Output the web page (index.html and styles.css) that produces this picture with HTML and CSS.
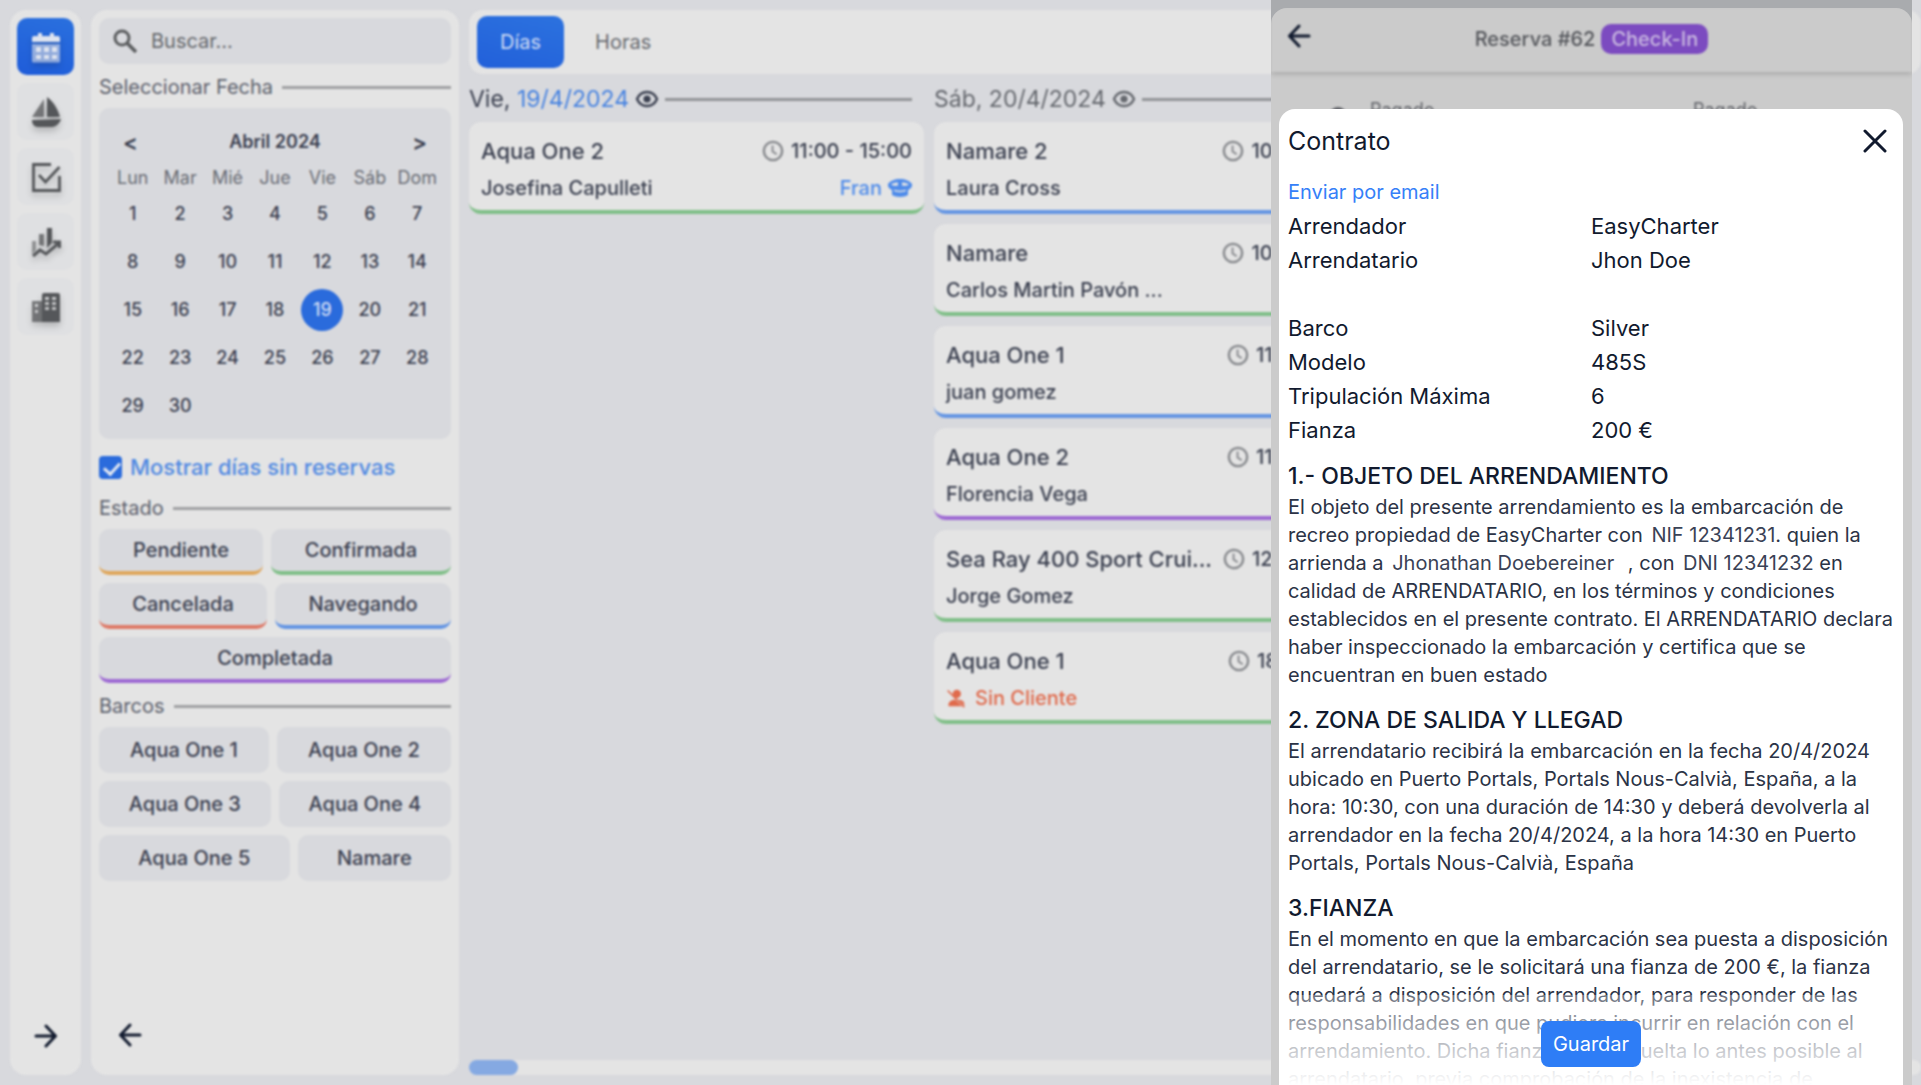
FILE: index.html
```html
<!DOCTYPE html>
<html lang="es">
<head>
<meta charset="utf-8">
<meta name="viewport" content="width=device-width, initial-scale=1">
<title>EasyCharter - Reservas</title>
<link rel="stylesheet" href="styles.css">
</head>
<body>
<svg class="sprite" aria-hidden="true">
  <symbol id="eye" viewBox="0 0 24 24"><path fill="none" stroke="currentColor" stroke-width="2.4" d="M2 12c2-4.600 5.700-7 10-7s8 2.400 10 7c-2 4.600-5.700 7-10 7s-8-2.400-10-7z"/><circle cx="12" cy="12" r="3.600" fill="currentColor"/></symbol>
  <symbol id="clock" viewBox="0 0 24 24"><circle cx="12" cy="12" r="10" fill="none" stroke="currentColor" stroke-width="2.600"/><path fill="none" stroke="currentColor" stroke-width="2" d="M11.500 6v6.500l4.500 3"/></symbol>
  <symbol id="arrow-left" viewBox="0 0 24 24"><path fill="none" stroke="currentColor" stroke-width="3" stroke-linecap="round" stroke-linejoin="round" d="M22 12H2.500M12 2L2.500 12l9.500 10"/></symbol>
  <symbol id="arrow-right" viewBox="0 0 24 24"><path fill="none" stroke="currentColor" stroke-width="3" stroke-linecap="round" stroke-linejoin="round" d="M2 12h19.500M12 2l9.500 10-9.500 10"/></symbol>
</svg>

<div class="app">
  <nav class="rail" aria-label="Principal">
    <button class="rail-button active" aria-label="Calendario"><svg viewBox="0 0 32 32"><path fill="currentColor" d="M4 5h4V2h4v3h8V2h4v3h4a2 2 0 0 1 2 2v4H2V7a2 2 0 0 1 2-2z"/><path fill="currentColor" opacity=".6" d="M2 13h28v17a1.500 1.500 0 0 1-1.500 1.500h-25A1.500 1.500 0 0 1 2 30z"/><path fill="currentColor" d="M6 16h5v5H6zm8 0h5v5h-5zm8 0h5v5h-5zM6 24h5v4H6zm8 0h5v4h-5zm8 0h5v4h-5z"/></svg></button>
    <button class="rail-button" aria-label="Barcos"><svg viewBox="0 0 32 32"><path fill="currentColor" opacity=".75" d="M14 3v18H2z"/><path fill="currentColor" d="M17 1c6 4 11 12 13 20H17zM2 24l29-1c-1 4-5 8-9 8H8c-4 0-6-3-6-7z"/></svg></button>
    <button class="rail-button" aria-label="Tareas"><svg viewBox="0 0 32 32"><path fill="none" stroke="currentColor" stroke-width="2.800" d="M21 3.500H3.500v26h26V15M9 14l6.500 7L29.500 6"/></svg></button>
    <button class="rail-button" aria-label="Estadísticas"><svg viewBox="0 0 32 32"><path fill="currentColor" opacity=".55" d="M2 15h4v9l-4 4z"/><path fill="currentColor" opacity=".75" d="M9 8h5v12l-5-1z"/><path fill="currentColor" d="M17 2h5v15l-5 5z"/><path fill="none" stroke="currentColor" stroke-width="3" d="M3 30l7-6 6 4L29 17M23 16h6.500v6"/></svg></button>
    <button class="rail-button" aria-label="Empresa"><svg viewBox="0 0 32 32"><path fill="currentColor" opacity=".75" fill-rule="evenodd" d="M2 10h10v21H2zM5 13v3h3v-3zm0 6v3h3v-3z"/><path fill="currentColor" fill-rule="evenodd" d="M14 2h14a2 2 0 0 1 2 2v27H12V4a2 2 0 0 1 2-2zm1 4v3h4V6zm7 0v3h4V6zm-7 5v3h4v-3zm7 0v3h4v-3zm-7 5v3h4v-3zm7 0v3h4v-3z"/></svg></button>
    <button class="icon-button rail-toggle" aria-label="Expandir menú"><svg><use href="#arrow-right"/></svg></button>
  </nav>

  <aside class="filters">
    <label class="search">
      <svg viewBox="0 0 24 24"><circle cx="9" cy="9" r="7" fill="none" stroke="currentColor" stroke-width="3"/><path stroke="currentColor" stroke-width="3.600" d="M14 14l9 9"/></svg>
      <input type="search" placeholder="Buscar..." aria-label="Buscar">
    </label>

    <section class="group">
      <h2 class="rule-title">Seleccionar Fecha</h2>
      <div class="calendar">
        <div class="calendar-head"><button aria-label="Mes anterior">&lt;</button><strong>Abril 2024</strong><button aria-label="Mes siguiente">&gt;</button></div>
        <table>
          <thead><tr><th>Lun</th><th>Mar</th><th>Mié</th><th>Jue</th><th>Vie</th><th>Sáb</th><th>Dom</th></tr></thead>
          <tbody>
            <tr><td>1</td><td>2</td><td>3</td><td>4</td><td>5</td><td>6</td><td>7</td></tr>
            <tr><td>8</td><td>9</td><td>10</td><td>11</td><td>12</td><td>13</td><td>14</td></tr>
            <tr><td>15</td><td>16</td><td>17</td><td>18</td><td><span class="selected">19</span></td><td>20</td><td>21</td></tr>
            <tr><td>22</td><td>23</td><td>24</td><td>25</td><td>26</td><td>27</td><td>28</td></tr>
            <tr><td>29</td><td>30</td><td></td><td></td><td></td><td></td><td></td></tr>
          </tbody>
        </table>
      </div>
    </section>

    <label class="check"><input type="checkbox" checked>Mostrar días sin reservas</label>

    <section class="group">
      <h2 class="rule-title">Estado</h2>
      <div class="chips">
        <button class="chip orange">Pendiente</button><button class="chip green">Confirmada</button>
        <button class="chip red">Cancelada</button><button class="chip blue">Navegando</button>
        <button class="chip purple">Completada</button>
      </div>
    </section>
    <section class="group">
      <h2 class="rule-title">Barcos</h2>
      <div class="chips">
        <button class="chip">Aqua One 1</button><button class="chip">Aqua One 2</button>
        <button class="chip">Aqua One 3</button><button class="chip">Aqua One 4</button>
        <button class="chip">Aqua One 5</button><button class="chip">Namare</button>
      </div>
    </section>
    <button class="icon-button filters-toggle" aria-label="Ocultar filtros"><svg><use href="#arrow-left"/></svg></button>
  </aside>

  <main class="board">
    <div class="tabs"><button class="tab active">Días</button><button class="tab">Horas</button></div>
    <div class="days">
      <section class="day today">
        <h2 class="day-title"><span>Vie, <b>19/4/2024</b></span><svg><use href="#eye"/></svg></h2>
        <article class="booking green">
          <div class="row"><h3>Aqua One 2</h3><time><svg><use href="#clock"/></svg>11:00 - 15:00</time></div>
          <div class="row"><p>Josefina Capulleti</p><p class="skipper">Fran <svg viewBox="0 0 24 20"><path fill="currentColor" fill-rule="evenodd" d="M12 1c5 0 10 2 12 5 .5 3-1.500 5-4 6v5c-4 2.500-12 2.500-16 0v-5c-2.500-1-4.500-3-4-6 2-3 7-5 12-5zM3 6.500c2 1.500 4.500 1.500 7 1V4.500C7.500 4.500 5 5 3 6.500zm18 0c-2-1.500-4.500-2-7-2v3c2.500.5 5 .5 7-1zM6 11.500v1.500c3 1.500 9 1.500 12 0v-1.500c-3 1.500-9 1.500-12 0z"/></svg></p></div>
        </article>
      </section>
      <section class="day">
        <h2 class="day-title"><span>Sáb, 20/4/2024</span><svg><use href="#eye"/></svg></h2>
        <article class="booking blue">
          <div class="row"><h3>Namare 2</h3><time><svg><use href="#clock"/></svg>10:00 - 15:00</time></div>
          <div class="row"><p>Laura Cross</p></div>
        </article>
        <article class="booking green">
          <div class="row"><h3>Namare</h3><time><svg><use href="#clock"/></svg>10:00 - 15:00</time></div>
          <div class="row"><p>Carlos Martin Pavón ...</p></div>
        </article>
        <article class="booking blue">
          <div class="row"><h3>Aqua One 1</h3><time><svg><use href="#clock"/></svg>11:00 - 15:00</time></div>
          <div class="row"><p>juan gomez</p></div>
        </article>
        <article class="booking purple">
          <div class="row"><h3>Aqua One 2</h3><time><svg><use href="#clock"/></svg>11:00 - 15:00</time></div>
          <div class="row"><p>Florencia Vega</p></div>
        </article>
        <article class="booking green">
          <div class="row"><h3>Sea Ray 400 Sport Crui...</h3><time><svg><use href="#clock"/></svg>12:00 - 15:00</time></div>
          <div class="row"><p>Jorge Gomez</p></div>
        </article>
        <article class="booking green">
          <div class="row"><h3>Aqua One 1</h3><time><svg><use href="#clock"/></svg>18:00 - 21:15</time></div>
          <div class="row"><p class="missing"><svg viewBox="0 0 24 24"><circle cx="13" cy="7" r="5" fill="currentColor"/><path fill="currentColor" d="M3 20c0-4 4-6 8-6l8 8H3z"/><path stroke="currentColor" stroke-width="2" d="M2 3l20 20"/><path fill="currentColor" d="M15 14c4 0 7 2 7 5v2z"/></svg>Sin Cliente</p></div>
        </article>
      </section>
    </div>
    <div class="scrollbar"><div class="thumb"></div></div>
  </main>
</div>

<aside class="drawer">
  <div class="reservation">
    <header>
      <button class="icon-button" aria-label="Volver"><svg><use href="#arrow-left"/></svg></button>
      <h2>Reserva #62 <span class="badge">Check-In</span></h2>
    </header>
    <div class="payments"><span class="payment"><i></i>Pagado</span><span class="payment">Pagado</span></div>
  </div>
  <section class="contract" role="dialog" aria-labelledby="contract-title">
    <header>
      <h2 id="contract-title">Contrato</h2>
      <button class="icon-button" aria-label="Cerrar"><svg viewBox="0 0 24 24"><path stroke="currentColor" stroke-width="3" stroke-linecap="round" d="M2 2l20 20M22 2L2 22"/></svg></button>
    </header>
    <a href="#email">Enviar por email</a>
    <dl>
      <dt>Arrendador</dt><dd>EasyCharter</dd>
      <dt>Arrendatario</dt><dd>Jhon Doe</dd>
    </dl>
    <dl>
      <dt>Barco</dt><dd>Silver</dd>
      <dt>Modelo</dt><dd>485S</dd>
      <dt>Tripulación Máxima</dt><dd>6</dd>
      <dt>Fianza</dt><dd>200 €</dd>
    </dl>
    <h3>1.- OBJETO DEL ARRENDAMIENTO</h3>
    <p>El objeto del presente arrendamiento es la embarcación de recreo propiedad de EasyCharter con <span class="field">NIF 12341231</span>. quien la arrienda a <span class="field wide">Jhonathan Doebereiner</span> , con <span class="field">DNI 12341232</span> en calidad de ARRENDATARIO, en los términos y condiciones establecidos en el presente contrato. El ARRENDATARIO declara haber inspeccionado la embarcación y certifica que se encuentran en buen estado</p>
    <h3>2. ZONA DE SALIDA Y LLEGAD</h3>
    <p>El arrendatario recibirá la embarcación en la fecha 20/4/2024 ubicado en Puerto Portals, Portals Nous-Calvià, España, a la hora: 10:30, con una duración de 14:30 y deberá devolverla al arrendador en la fecha 20/4/2024, a la hora 14:30 en Puerto Portals, Portals Nous-Calvià, España</p>
    <h3>3.FIANZA</h3>
    <p>En el momento en que la embarcación sea puesta a disposición del arrendatario, se le solicitará una fianza de 200 €, la fianza quedará a disposición del arrendador, para responder de las responsabilidades en que pudiera incurrir en relación con el arrendamiento. Dicha fianza será devuelta lo antes posible al arrendatario, previa comprobación de la inexistencia de</p>
    <div class="save-bar"><button class="save">Guardar</button></div>
  </section>
</aside>
</body>
</html>
```
FILE: styles.css
```css
:root {
  --page: #d8d9dd;
  --card: #e4e4e4;
  --ink: #3b4050;
  --navy: #111a2e;
  --primary: #2a6bdc;
}
* { box-sizing: border-box; margin: 0; }
body {
  height: 100vh;
  overflow: hidden;
  background: var(--page);
  color: var(--ink);
  font: 400 20px/24px Inter, "Liberation Sans", sans-serif;
}
button, input { font: inherit; color: inherit; border: 0; padding: 0; background: none; }
h2, h3 { font-size: inherit; font-weight: inherit; }
.sprite { position: absolute; width: 0; height: 0; }

.app {
  display: flex;
  gap: 10px;
  height: 100vh;
  padding: 10px 0 10px 10px;
  filter: blur(1px);
}
.icon-button { width: 24px; height: 24px; color: var(--navy); }
.icon-button svg { display: block; width: 24px; height: 24px; }

/* Icon rail */
.rail {
  display: flex;
  flex: none;
  flex-direction: column;
  align-items: center;
  gap: 8px;
  width: 71px;
  padding: 8px 7px 27px;
  border-radius: 16px;
  background: var(--card);
}
.rail-button {
  display: grid;
  place-items: center;
  width: 57px;
  height: 57px;
  border-radius: 10px;
  background: #dfe0e2;
  color: #55575a;
}
.rail-button svg { width: 32px; height: 32px; filter: drop-shadow(0 4px 3px rgba(0, 0, 0, .2)); }
.rail-button.active { background: linear-gradient(15deg, #1f5cd9, #2a70de); color: #dde3ef; }
.rail-toggle { margin-top: auto; }

/* Filter panel */
.filters {
  display: flex;
  flex: none;
  flex-direction: column;
  gap: 10px;
  width: 368px;
  padding: 8px 8px 28px;
  border-radius: 16px;
  background: var(--card);
}
.search {
  display: flex;
  align-items: center;
  gap: 14px;
  height: 46px;
  padding: 0 14px;
  border-radius: 10px;
  background: var(--page);
  color: #5c5e60;
}
.search svg { flex: none; width: 24px; height: 24px; }
.search input { width: 100%; }
.search input::placeholder { color: #66686c; opacity: 1; }
.group { display: flex; flex-direction: column; gap: 8px; }
.rule-title { display: flex; align-items: center; gap: 9px; line-height: 26px; color: #5c606c; }
.rule-title::after { content: ""; flex: 1; height: 3px; background: #a0a1a3; }
.calendar { padding: 19px 10px 9px; border-radius: 10px; background: var(--page); font-size: 18px; }
.calendar-head { display: flex; justify-content: space-between; height: 30px; margin-bottom: 9px; padding: 0 14px; line-height: 30px; }
.calendar-head strong { font-weight: 600; }
.calendar-head button { font-size: 22px; font-weight: 600; }
.calendar table { width: 100%; table-layout: fixed; border-collapse: collapse; text-align: center; }
.calendar th { height: 24px; padding: 0; font-weight: 400; color: #696c74; }
.calendar td { height: 48px; padding: 0; font-weight: 500; }
.selected { display: block; width: 42px; margin: 0 auto; border-radius: 50%; background: var(--primary); color: #cfdcf4; line-height: 42px; }
.check { display: flex; align-items: center; gap: 8px; height: 36px; color: #5089e2; font-size: 22px; font-weight: 500; }
.check input {
  appearance: none;
  width: 23px;
  height: 23px;
  border-radius: 4px;
  background: var(--primary);
}
.check input::after {
  content: "";
  display: block;
  width: 7px;
  height: 13px;
  margin: 3px 8px;
  border: solid #e4e9f2;
  border-width: 0 3px 3px 0;
  transform: rotate(42deg);
}
.chips { display: flex; flex-wrap: wrap; gap: 8px; }
.chip {
  flex: 1 1 auto;
  height: 46px;
  padding: 0 24px;
  border-radius: 10px;
  background: var(--page);
  font-weight: 500;
}
.chip.orange, .chip.green, .chip.red, .chip.blue, .chip.purple { border-bottom: 4px solid; }
.chip.orange { border-color: #dfa75c; }
.chip.green, .booking.green { border-color: #80bf88; }
.chip.red { border-color: #de7a68; }
.chip.blue, .booking.blue { border-color: #6495e3; }
.chip.purple, .booking.purple { border-color: #9d69d3; }
.filters-toggle { margin: auto 0 0 19px; }

/* Booking board */
.board { display: flex; flex: 1; flex-direction: column; gap: 10px; min-width: 0; }
.tabs { display: flex; gap: 8px; padding: 6px 8px; border-radius: 14px; background: var(--card); }
.tab { height: 52px; padding: 0 23px; border-radius: 10px; color: #66696f; }
.tab.active { background: linear-gradient(15deg, #2260da, #2c72df); color: #cfdcf4; }
.days { display: flex; flex: 1; gap: 10px; overflow: hidden; }
.day { flex: none; width: 455px; }
.day-title { display: flex; align-items: center; gap: 6px; margin: 0 12px 8px 0; line-height: 30px; font-size: 23px; color: #65686e; }
.day-title svg { width: 24px; height: 24px; }
.day-title::after { content: ""; flex: 1; height: 3px; background: #929497; }
.day-title b { font-weight: 400; color: #4682e0; }
.today .day-title { color: var(--ink); }
.booking {
  display: flex;
  flex-direction: column;
  gap: 9px;
  height: 92px;
  margin-bottom: 10px;
  padding: 15px 12px 0;
  border-bottom: 4px solid;
  border-radius: 12px;
  background: var(--card);
  font-weight: 500;
}
.row { display: flex; justify-content: space-between; line-height: 28px; white-space: nowrap; }
.booking h3 { font-size: 22px; font-weight: 500; }
.booking time { display: flex; align-items: center; gap: 7px; }
.booking time svg { width: 22px; height: 22px; color: #85878b; }
.skipper, .missing { display: flex; align-items: center; gap: 6px; color: #4e8bea; }
.skipper svg { width: 24px; height: 20px; }
.missing { gap: 9px; color: #e06a4c; }
.missing svg { width: 20px; height: 20px; }
.scrollbar { flex: none; height: 15px; border-radius: 8px; background: var(--card); }
.thumb { width: 49px; height: 15px; border-radius: 8px; background: #85a9e2; }

/* Reservation drawer with the contract sheet over it */
.drawer { position: fixed; top: 0; right: 9px; bottom: 0; width: 641px; padding-top: 8px; background: #a9abae; overflow: hidden; }
.reservation { height: 100%; border-radius: 16px 16px 0 0; background: #cbcbcb; overflow: hidden; }
.reservation header {
  display: flex;
  align-items: flex-start;
  height: 64px;
  padding: 16px 16px 0;
  box-shadow: 0 2px 5px rgba(0, 0, 0, .18);
  filter: blur(1px);
}
.reservation h2 { flex: 1; display: flex; justify-content: center; align-items: center; gap: 6px; padding-right: 24px; font-weight: 500; color: #55575c; }
.badge { padding: 3px 10px; border-radius: 10px; background: #7c4bc0; color: #c9b8e0; }
.payments { display: grid; grid-template-columns: 323px 1fr; padding: 27px 0 0 99px; filter: blur(1px); color: #606268; font-size: 18px; line-height: 22px; }
.payment { display: flex; }
.payment i { width: 16px; height: 16px; margin: 8px 17px 0 -40px; border-radius: 50%; background: #606268; }
.payment i { margin-right: 24px; }
.contract {
  position: absolute;
  top: 109px;
  right: 9px;
  bottom: 0;
  left: 8px;
  padding: 14px 4px 0 9px;
  border-radius: 16px 16px 0 0;
  background: #fff;
  color: var(--navy);
  overflow: hidden;
}
.contract header { display: flex; justify-content: space-between; align-items: center; height: 36px; margin-bottom: 16px; padding-right: 12px; }
.contract h2 { font-size: 25px; }
.contract a { display: block; line-height: 34px; color: #3580f8; text-decoration: none; }
.contract dl { display: grid; grid-template-columns: 303px 1fr; margin-bottom: 34px; line-height: 34px; font-size: 22px; }
.contract dd { margin: 0; }
.contract dl + dl { margin-bottom: 0; }
.contract h3 { margin-top: 12px; line-height: 34px; font-size: 23px; font-weight: 500; }
.contract p + h3 { margin-top: 14px; }
.contract p { line-height: 28px; color: #2b3346; }
.field { padding-left: 3px; color: #3a4256; }
.field.wide { padding-right: 8px; }
.save-bar {
  position: absolute;
  right: 0;
  bottom: 0;
  left: 0;
  display: flex;
  justify-content: center;
  padding: 26px 0 18px;
  background: linear-gradient(rgba(255, 255, 255, .3), #fff);
}
.save { height: 46px; padding: 0 12px; border-radius: 8px; background: #2e7df6; color: #fff; }
```
